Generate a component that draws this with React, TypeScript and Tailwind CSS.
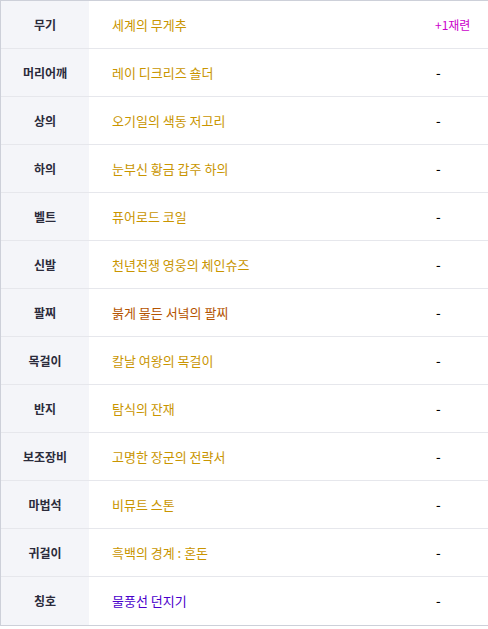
import React from 'react';

type EquipItem = {
    slot: string;
    name: string;
    color: string;
    extra?: string;
};

const items: EquipItem[] = [
    { slot: '무기', name: '세계의 무게추', color: 'text-[#c99500]', extra: '+1재련' },
    { slot: '머리어깨', name: '레이 디크리즈 숄더', color: 'text-[#c99500]' },
    { slot: '상의', name: '오기일의 색동 저고리', color: 'text-[#c99500]' },
    { slot: '하의', name: '눈부신 황금 갑주 하의', color: 'text-[#c99500]' },
    { slot: '벨트', name: '퓨어로드 코일', color: 'text-[#c99500]' },
    { slot: '신발', name: '천년전쟁 영웅의 체인슈즈', color: 'text-[#c99500]' },
    { slot: '팔찌', name: '붉게 물든 서녘의 팔찌', color: 'text-[#b55400]' },
    { slot: '목걸이', name: '칼날 여왕의 목걸이', color: 'text-[#c99500]' },
    { slot: '반지', name: '탐식의 잔재', color: 'text-[#c99500]' },
    { slot: '보조장비', name: '고명한 장군의 전략서', color: 'text-[#c99500]' },
    { slot: '마법석', name: '비뮤트 스톤', color: 'text-[#c99500]' },
    { slot: '귀걸이', name: '흑백의 경계 : 혼돈', color: 'text-[#c99500]' },
    { slot: '칭호', name: '물풍선 던지기', color: 'text-[#4a00cc]' },
];

const App: React.FC = () => {
    return (
        <div
            className="w-[488px] bg-white text-[12px] border-t border-l border-b border-[#cdd0d9]"
            style={{ fontFamily: '"Noto Sans CJK KR", "Noto Sans", sans-serif' }}
        >
            {items.map((item, i) => (
                <div
                    key={item.slot}
                    className={`grid grid-cols-[88px_1fr_53px] h-[48px] ${i < items.length - 1 ? 'border-b border-[#e6e7ec]' : ''}`}
                >
                    <div className="bg-[#f4f5f9] flex items-center justify-center font-bold text-[#2b2b3b]">
                        {item.slot}
                    </div>
                    <div className={`flex items-center pl-[23px] text-[13px] ${item.color}`}>{item.name}</div>
                    <div className="flex items-center">
                        {item.extra ? (
                            <span className="text-[#cc00cc]">{item.extra}</span>
                        ) : (
                            <span className="text-black text-[13px] font-medium pl-[1px]">-</span>
                        )}
                    </div>
                </div>
            ))}
        </div>
    );
};

export default App;
